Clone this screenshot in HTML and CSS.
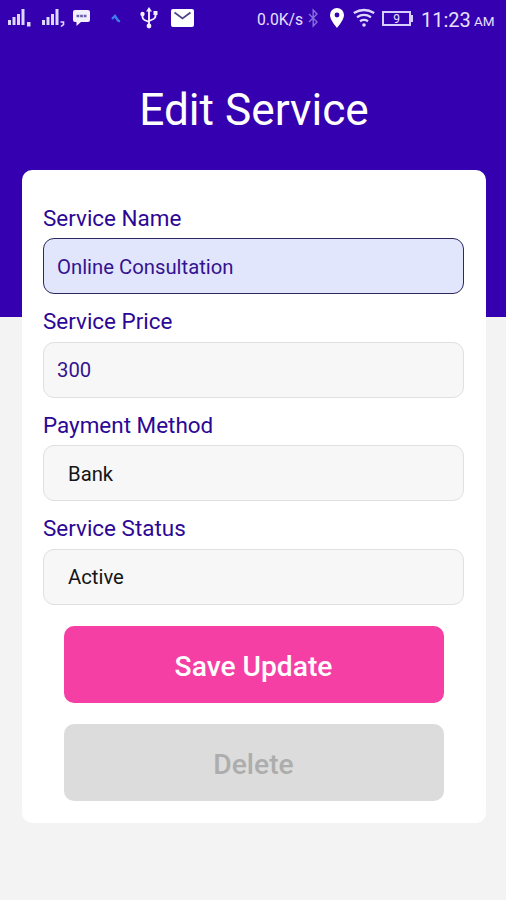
FILE: index.html
```html
<!DOCTYPE html>
<html lang="en">
<head>
<meta charset="utf-8">
<title>Edit Service</title>
<link rel="stylesheet" href="styles.css">
</head>
<body>
<div class="screen">
  <div class="status">
    <svg class="signal" width="24" height="20" viewBox="0 0 24 20"><path fill="#dcd8ff" d="M0 12h3v5H0zM4.500 9h3v8h-3zM9 6h3v11H9zM13.500 1h3v16h-3zM19 14h3.500v4.500H19z"/></svg>
    <svg class="signal-two" width="24" height="20" viewBox="0 0 24 20"><path fill="#dcd8ff" d="M0 12h3v5H0zM4.500 9h3v8h-3zM9 6h3v11H9zM13.500 1h3v16h-3z"/><path fill="none" stroke="#dcd8ff" stroke-width="1.600" d="M18.500 14h3v2.500l-2.500 2"/></svg>
    <svg class="message" width="18" height="20" viewBox="0 0 18 20"><path fill="#f2efff" d="M2 2h13q2 0 2 2v8q0 2-2 2H8l-4.500 4v-4H2q-2 0-2-2V4q0-2 2-2z"/><path stroke="#6e60ae" stroke-width="2.500" stroke-dasharray="2.800 .8" d="M3.500 8H14"/></svg>
    <svg class="squiggle" width="11" height="20" viewBox="0 0 11 20"><path fill="none" stroke="#3d7ee8" stroke-width="2.400" d="M1 11L4 8l3 4.500 2 1"/></svg>
    <svg class="usb" width="18" height="22" viewBox="0 0 18 22"><g fill="none" stroke="#f2efff" stroke-width="1.900"><path d="M9 4v14M2.500 7v3q0 2 2 3L9 15M15.500 7v2q0 2-2 3L9 14"/></g><path fill="#f2efff" d="M9 0l3 4.500H6zM13.500 4h4v4h-4z"/><circle cx="2.500" cy="7" r="2.200" fill="#f2efff"/><circle cx="9" cy="19" r="2.400" fill="#f2efff"/></svg>
    <svg class="mail" width="23" height="20" viewBox="0 0 23 20"><rect y="1" width="23" height="18" rx="2" fill="#fff"/><path fill="none" stroke="#4e4388" stroke-width="1.700" d="M3.500 4.500l8 6 8-6"/></svg>
    <span class="speed">0.0K/s</span>
    <svg class="bluetooth" width="11" height="20" viewBox="0 0 11 20"><path fill="none" stroke="#8670dc" stroke-width="1.400" d="M1 6l8 8-3.800 4V2L9 6l-8 8"/></svg>
    <svg class="pin" width="14" height="20" viewBox="0 0 14 20"><path fill="#fff" fill-rule="evenodd" d="M7 0a7 7 0 0 1 7 7c0 4-3.500 8.500-7 13C3.500 15.500 0 11 0 7a7 7 0 0 1 7-7zm0 4.600a2.400 2.400 0 1 0 0 4.800 2.400 2.400 0 0 0 0-4.800z"/></svg>
    <svg class="wifi" width="22" height="20" viewBox="0 0 22 20"><g fill="none" stroke="#dcd8ff" stroke-width="2.300"><path d="M.8 5q10.200-6 20.400 0M4 9.200q7-4.500 14 0M7 13.200q4-2.500 8 0"/></g><circle cx="11" cy="17" r="1.800" fill="#dcd8ff"/></svg>
    <span class="battery">9</span>
    <span class="time">11:23</span><span class="meridiem">AM</span>
  </div>
  <h1 class="title"><span>Edit Service</span></h1>
  <main class="card">
    <div class="group"><label class="label">Service Name</label><div class="field focused">Online Consultation</div></div>
    <div class="group"><label class="label">Service Price</label><div class="field number">300</div></div>
    <div class="group"><label class="label">Payment Method</label><div class="field choice">Bank</div></div>
    <div class="group"><label class="label">Service Status</label><div class="field choice active">Active</div></div>
    <div class="button save">Save Update</div>
    <div class="button delete">Delete</div>
  </main>
</div>
</body>
</html>
```
FILE: styles.css
```css
* { box-sizing: border-box; }
body { margin: 0; font-family: Roboto, sans-serif; }
.screen { height: 900px; overflow: hidden; background: linear-gradient(#3500b0 317px, #f3f3f3 317px); }
.status { display: flex; align-items: center; height: 36px; padding-left: 8px; color: #e6e1ff; white-space: nowrap; }
.status svg, .status span { flex: none; }
.signal-two { margin-left: 10px; }
.message { margin-left: 7px; }
.squiggle { margin-left: 20px; }
.usb { margin-left: 18px; }
.mail { margin-left: 13px; }
.speed { width: 46px; margin-left: 63px; padding-top: 2px; font-size: 15.7px; }
.bluetooth { margin-left: 5px; }
.pin { margin-left: 11px; }
.wifi { margin-left: 9px; }
.battery { position: relative; width: 29px; height: 15px; margin-left: 7px; border: 2px solid #d5ceff; font-size: 12px; line-height: 12px; text-align: center; }
.battery::after { content: ""; position: absolute; right: -4px; top: 2px; width: 3px; height: 7px; background: #d5ceff; }
.time { width: 49px; margin-left: 10px; padding-top: 3px; font-size: 20px; }
.meridiem { margin-left: 4px; padding-top: 5px; font-size: 13.5px; }
.title { display: flex; justify-content: center; margin: 0; height: 133px; padding: 47px 0 0 2px; font-size: 44.2px; font-weight: 400; line-height: 54px; color: #fff; }
.card { width: 464px; height: 653px; margin: 0.5px 0 0 21.5px; padding: 34px 21.500px 0; border-radius: 10px; background: #fff; }
.group { height: 103.500px; }
.label { display: block; height: 34.500px; padding-top: 1px; font-size: 22.45px; line-height: 27px; color: #2c0796; }
.field { height: 56px; padding: 0 13px; border: 1.500px solid #e0e0e0; border-radius: 11px; background: #f7f7f7; color: #35128f; font-size: 20.3px; line-height: 56px; }
.focused { border-color: #2e285c; background: #e1e6fd; }
.number, .active { line-height: 54px; }
.choice { padding-left: 24px; color: #151515; }
.button { width: 380px; height: 77px; margin: 0 auto; border-radius: 10px; font-size: 28.2px; font-weight: 500; line-height: 81px; text-align: center; }
.save { margin-top: 8px; background: #f63fa5; color: #fff; }
.delete { margin-top: 21px; background: #dcdcdc; color: #adadad; }
```
